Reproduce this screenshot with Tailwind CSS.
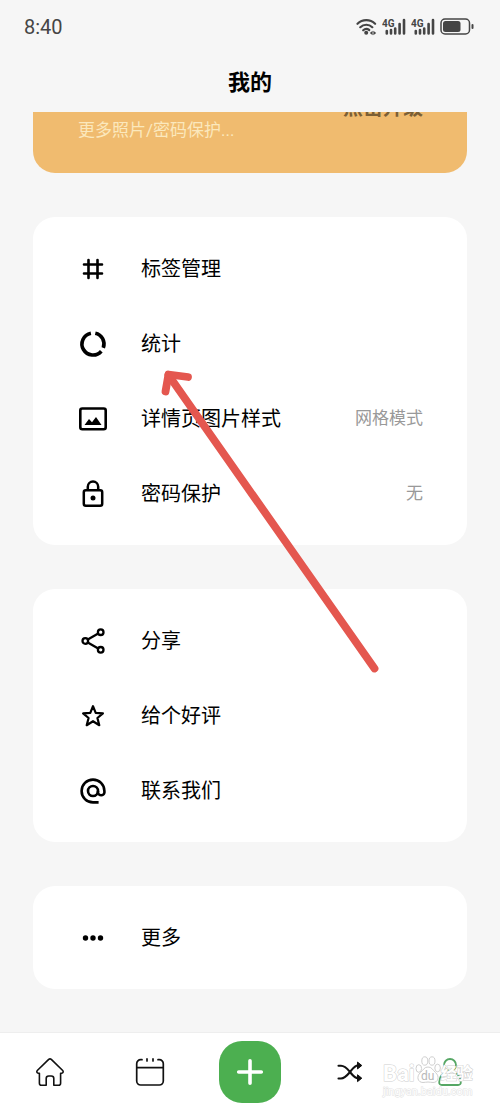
<!DOCTYPE html>
<html lang="zh-CN">
<head>
<meta charset="utf-8">
<meta name="viewport" content="width=device-width, initial-scale=1">
<title>我的</title>
<script src="https://cdn.jsdelivr.net/npm/@tailwindcss/browser@4"></script>
</head>
<body class="relative flex min-h-screen flex-col overflow-x-hidden bg-[#f6f6f6] font-['Roboto','Noto_Sans_CJK_SC',sans-serif] text-black">

<!-- Status bar -->
<div class="flex h-[54px] items-center justify-between pr-[26px] pl-6 text-[#454545]">
  <time class="text-xl leading-6">8:40</time>
  <div class="flex items-center gap-[5px]">
    <svg class="h-[18px] w-[21px]" viewBox="0 0 21 18" fill="none" stroke="currentColor" stroke-width="2.200" stroke-linecap="round" aria-label="Wi-Fi">
      <path d="M1.500 5.800a12.600 12.600 0 0 1 17.600 0M4.300 9.200a8.600 8.600 0 0 1 12 0M7.200 12.300a4.800 4.800 0 0 1 6 -.3"/>
      <circle cx="10.200" cy="14.700" r="2" fill="currentColor" stroke="none"/>
      <path d="M16.600 12.800l-2.800 2.200 2.800 2.200zM17.400 12.800l2.800 2.200-2.800 2.200z" fill="currentColor" stroke="none"/>
    </svg>
    <svg class="h-[18px] w-6" viewBox="0 0 24 18" aria-label="4G">
      <text x="0" y="9" font-size="10" font-weight="700" fill="currentColor">4G</text>
      <path d="M4.800 13v2.500M9 12v3.500M13.200 10.500v5M17.600 6v9.500M22 2v13.500" stroke="currentColor" stroke-width="2.600" stroke-linecap="round" fill="none"/>
    </svg>
    <svg class="h-[18px] w-6" viewBox="0 0 24 18" aria-label="4G">
      <text x="0" y="9" font-size="10" font-weight="700" fill="currentColor">4G</text>
      <path d="M4.800 13v2.500M9 12v3.500M13.200 10.500v5M17.600 6v9.500M22 2v13.500" stroke="currentColor" stroke-width="2.600" stroke-linecap="round" fill="none"/>
    </svg>
    <svg class="h-[18px] w-[34px]" viewBox="0 0 34 18" aria-label="电量">
      <rect x="1" y="1" width="28.500" height="15" rx="4" fill="none" stroke="currentColor" stroke-width="1.500"/>
      <rect x="3" y="3" width="17.500" height="11" rx="2.500" fill="currentColor"/>
      <rect x="31.500" y="6" width="2" height="5" rx="1" fill="currentColor"/>
    </svg>
  </div>
</div>

<header class="flex h-[58px] items-center justify-center">
  <h1 class="text-[22px] leading-8 font-bold">我的</h1>
</header>

<main class="flex flex-1 flex-col gap-11 px-[33px] pb-[43px]">
  <!-- Upgrade banner, scrolled partly under the header -->
  <section class="flex h-[61px] flex-col justify-end overflow-hidden rounded-b-[22px] bg-[#f0bb6f] pr-11 pl-[45px]">
    <button type="button" class="shrink-0 self-end text-xl leading-6 font-bold text-[#7c5f35]">点击升级</button>
    <p class="shrink-0 pb-[33px] text-[17px] leading-5 text-[#fbe8bd]">更多照片/密码保护...</p>
  </section>

  <section class="rounded-[22px] bg-white py-3.5">
    <a href="#tags" class="flex h-[75px] items-center pr-11 pl-[45px] text-xl">
      <svg class="mr-[33px] h-[30px] w-[30px]" viewBox="0 0 30 30" fill="none" stroke="currentColor" stroke-width="2.600" stroke-linecap="round"><path d="M6 10.500h18M6 19.500h18M10.500 6v18M19.500 6v18"/></svg>
      <span>标签管理</span>
    </a>
    <a href="#stats" class="flex h-[75px] items-center pr-11 pl-[45px] text-xl">
      <svg class="mr-[33px] h-[30px] w-[30px]" viewBox="0 0 30 30" fill="none" stroke="currentColor" stroke-width="3.600"><path d="M17.300 4.200A11 11 0 0 1 25.300 18.800M23.300 22.200A11 11 0 1 1 12.900 4.200"/></svg>
      <span>统计</span>
    </a>
    <a href="#image-style" class="flex h-[75px] items-center pr-11 pl-[45px] text-xl">
      <svg class="mr-[33px] h-[30px] w-[30px]" viewBox="0 0 30 30"><rect x="2.300" y="4.500" width="25.400" height="20.800" rx="2" fill="none" stroke="currentColor" stroke-width="2.600"/><path d="M6.500 21l4.500-6 3 3.200 4-5.200 5.500 8z" fill="currentColor"/></svg>
      <span>详情页图片样式</span>
      <span class="ml-auto text-[17px] text-[#999]">网格模式</span>
    </a>
    <a href="#password" class="flex h-[75px] items-center pr-11 pl-[45px] text-xl">
      <svg class="mr-[33px] h-[30px] w-[30px]" viewBox="0 0 30 30" fill="none" stroke="currentColor" stroke-width="2.500"><rect x="5.800" y="11.300" width="18.400" height="15.400" rx="2"/><path d="M9.800 11V7.800a5.200 5.200 0 0 1 10.400 0V11"/><circle cx="15" cy="19" r="2.500" fill="currentColor" stroke="none"/></svg>
      <span>密码保护</span>
      <span class="ml-auto text-[17px] text-[#999]">无</span>
    </a>
  </section>

  <section class="rounded-[22px] bg-white py-3.5">
    <a href="#share" class="flex h-[75px] items-center pr-11 pl-[45px] text-xl">
      <svg class="mr-[33px] h-[30px] w-[30px]" viewBox="0 0 30 30" fill="none" stroke="currentColor" stroke-width="2.300"><circle cx="7.300" cy="15" r="2.800"/><circle cx="22.700" cy="6.200" r="2.800"/><circle cx="22.700" cy="23.800" r="2.800"/><path d="M9.800 13.600l10.400-6M9.800 16.400l10.400 6"/></svg>
      <span>分享</span>
    </a>
    <a href="#rate" class="flex h-[75px] items-center pr-11 pl-[45px] text-xl">
      <svg class="mr-[33px] h-[30px] w-[30px]" viewBox="0 0 30 30" fill="none" stroke="currentColor" stroke-width="2.200" stroke-linejoin="round"><path d="M15 5.200l2.700 6.700 7.200.5-5.500 4.600 1.900 7.200-6.300-4-6.300 4 1.900-7.200-5.500-4.600 7.200-.5z"/></svg>
      <span>给个好评</span>
    </a>
    <a href="#contact" class="flex h-[75px] items-center pr-11 pl-[45px] text-xl">
      <svg class="mr-[33px] h-[30px] w-[30px]" viewBox="0 0 30 30" fill="none" stroke="currentColor" stroke-width="2.600"><circle cx="15" cy="15" r="5"/><path d="M20 15v1.700a3.300 3.300 0 0 0 6.400 0V15A11.400 11.400 0 1 0 15 26.400h5.600"/></svg>
      <span>联系我们</span>
    </a>
  </section>

  <section class="rounded-[22px] bg-white py-3.5">
    <a href="#more" class="flex h-[75px] items-center pr-11 pl-[45px] text-xl">
      <svg class="mr-[33px] h-[30px] w-[30px]" viewBox="0 0 30 30" fill="currentColor"><circle cx="7.500" cy="15" r="2.700"/><circle cx="15" cy="15" r="2.700"/><circle cx="22.500" cy="15" r="2.700"/></svg>
      <span>更多</span>
    </a>
  </section>
</main>

<nav class="relative grid h-[79px] grid-cols-5 place-items-center border-t border-[#eeeeee] bg-white">
  <a href="#home" aria-label="首页">
    <svg class="h-[30px] w-[30px]" viewBox="0 0 30 30" fill="none" stroke="#111" stroke-width="1.600" stroke-linejoin="round" stroke-linecap="round"><path d="M13.700 2.400a2 2 0 0 1 2.600 0L27.700 13.500c1 1.200.4 2.700-1 2.700H25.600V26.300a2 2 0 0 1-2 2H18.800V21.500a2.500 2.500 0 0 0-2.500-2.500h-2.600a2.500 2.500 0 0 0-2.500 2.500v6.800H6.400a2 2 0 0 1-2-2V16.200H3.300c-1.400 0-2-1.500-1-2.700z"/></svg>
  </a>
  <a href="#calendar" aria-label="日历">
    <svg class="h-[30px] w-[30px]" viewBox="0 0 30 30" fill="none" stroke="#111" stroke-width="1.700" stroke-linecap="round"><path d="M7 2.700H5.700a4 4 0 0 0-4 4V24a4 4 0 0 0 4 4h18.600a4 4 0 0 0 4-4V6.700a4 4 0 0 0-4-4H23M2 10.700h26M12 1.900v2M18 1.900v2"/></svg>
  </a>
  <button type="button" aria-label="新建" class="flex h-[62px] w-[62px] items-center justify-center rounded-[23px] bg-[#4caf50]">
    <svg class="h-[30px] w-[30px]" viewBox="0 0 30 30" stroke="#fff" stroke-width="3.600" stroke-linecap="round"><path d="M15 3.700v22.600M3.700 15h22.600"/></svg>
  </button>
  <a href="#random" aria-label="随机">
    <svg class="h-[30px] w-[30px]" viewBox="0 0 30 30" fill="none" stroke="#111" stroke-width="2.100" stroke-linecap="round" stroke-linejoin="round"><path d="M3.500 8.800h2.500c4 0 6.500 3.200 9 6.200s4.500 6.200 8 6.200h2M3.500 21.500h2.500c4 0 6.500-3.500 9-6.500s4.500-6.500 8-6.500h2"/><path d="M22.800 5.300l4 3.200-4 3.200zM22.800 18l4 3.200-4 3.200z" fill="#111" stroke-width="1"/></svg>
  </a>
  <a href="#me" aria-label="我的" aria-current="page">
    <svg class="h-[30px] w-[30px]" viewBox="0 0 30 30" fill="none" stroke="#56a765" stroke-width="1.800" stroke-linecap="round"><circle cx="15" cy="8" r="6"/><path d="M10.500 15.200C6.500 17 4.600 20.500 4.200 25c-.1 2 .9 3 2.700 3h16.200c1.800 0 2.800-1 2.700-3-.4-4.500-2.300-8-6.300-9.800"/></svg>
  </a>

  <!-- Watermark -->
  <div class="pointer-events-none absolute right-[26px] bottom-[11px] flex w-[91px] flex-col text-white" aria-hidden="true">
    <div class="flex h-7 items-end">
      <span class="text-[22px] leading-5 font-bold [-webkit-text-stroke:1px_#cfcfcf] [paint-order:stroke_fill]">Bai</span>
      <svg class="h-7 w-[26px] shrink-0" viewBox="0 0 26 28" fill="#fff" stroke="#cfcfcf" stroke-width="1"><ellipse cx="3.800" cy="12.500" rx="2.800" ry="3.800"/><ellipse cx="9.800" cy="5" rx="3" ry="4.200"/><ellipse cx="17" cy="5" rx="3" ry="4.200"/><ellipse cx="22.600" cy="12" rx="2.800" ry="3.800"/><path d="M13 11c4 0 4.500 3 7.500 5.500 4.500 4 2.800 10-2.500 10-2 0-3-.5-5-.5s-3 .5-5 .5c-5.300 0-7-6-2.500-10C8.500 14 9 11 13 11z"/><text x="6" y="24" font-size="12" fill="#b8b8b8" stroke="none">du</text></svg>
      <span class="text-base leading-5 font-bold whitespace-nowrap [-webkit-text-stroke:1px_#cfcfcf] [paint-order:stroke_fill]">经验</span>
    </div>
    <span class="text-[11px] leading-4 whitespace-nowrap [-webkit-text-stroke:1px_#e2e2e2] [paint-order:stroke_fill]">jingyan.baidu.com</span>
  </div>
</nav>

<!-- Red arrow pointing at the statistics row -->
<svg class="pointer-events-none absolute top-[364px] left-[156px] h-[314px] w-[228px]" viewBox="0 0 228 314" fill="none" stroke="#e4574f" stroke-width="7.800" stroke-linecap="round" stroke-linejoin="round" aria-hidden="true">
  <path d="M12.500 11L218.500 304.500"/>
  <path d="M9.500 27.500L12.500 10.500l19.500 2.500"/>
</svg>
</body>
</html>
